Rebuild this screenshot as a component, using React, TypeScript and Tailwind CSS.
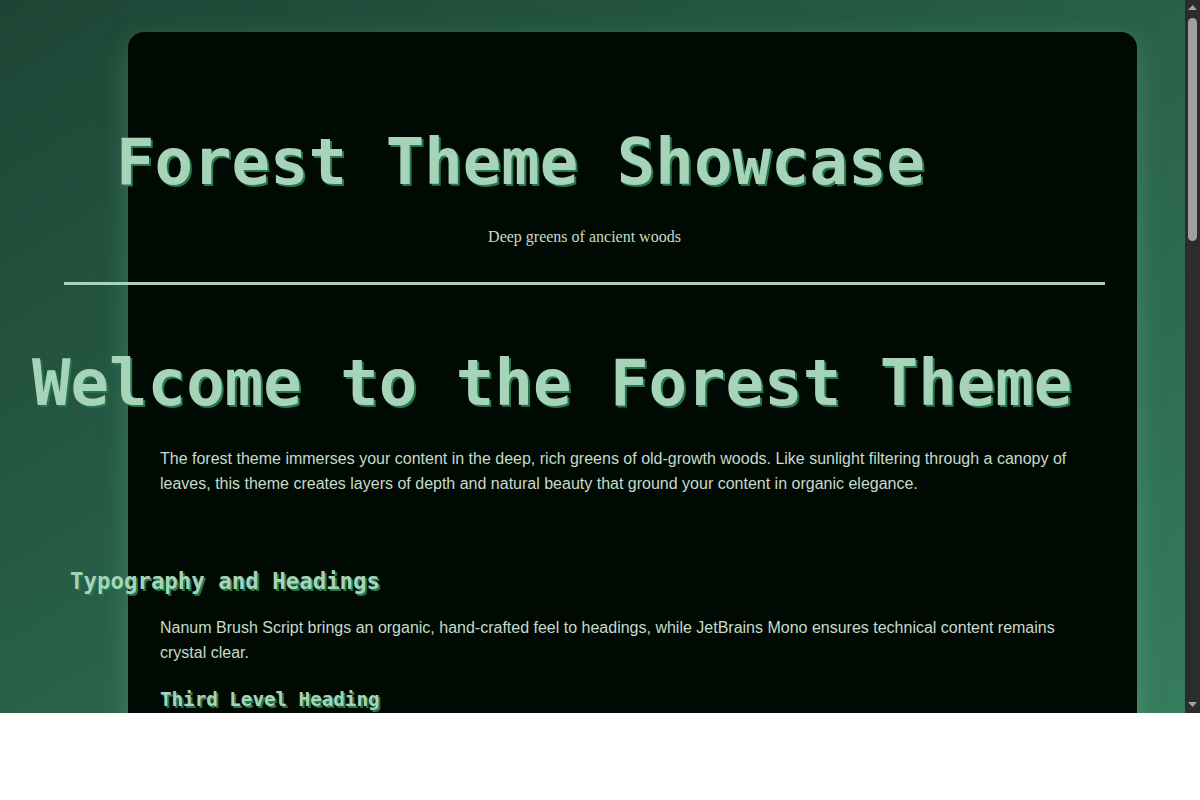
import React from "react";

const mono = { fontFamily: '"DejaVu Sans Mono", "Liberation Mono", monospace' };

const headShadow = "[text-shadow:2px_2px_0_#22774d]";

function Para({ children, className = "" }: { children: React.ReactNode; className?: string }) {
  return (
    <p className={`font-['Liberation_Sans',Arial,sans-serif] text-[16px] leading-[1.6] text-[#c6dacd] ${className}`}>
      {children}
    </p>
  );
}

function Scrollbar() {
  return (
    <div className="flex w-[15px] shrink-0 flex-col items-center bg-[#2c2c2c]">
      <svg width="9" height="5" viewBox="0 0 9 5" className="mt-[5px]">
        <polygon points="0,5 4.5,0 9,5" fill="#a3a3a3" />
      </svg>
      <div className="mt-[8px] h-[223px] w-[9px] rounded-full bg-[#9f9f9f]" />
      <div className="flex-1" />
      <svg width="9" height="5" viewBox="0 0 9 5" className="mb-[6px]">
        <polygon points="0,0 9,0 4.5,5" fill="#a3a3a3" />
      </svg>
    </div>
  );
}

export default function App() {
  return (
    <div className="flex h-[713px] w-full">
      <div className="min-w-0 flex-1 overflow-hidden bg-linear-to-br from-[#1d4535] to-[#357c5d]">
        <div className="pt-8">
          <main className="ml-[128px] w-[1009px] rounded-2xl bg-[#000a02] px-8 pb-32 shadow-[0_10px_30px_rgba(120,200,160,0.3)]">
            <header className="-ml-[96px] pt-[92px]">
              <h1
                style={mono}
                className={`-ml-[128px] text-center text-[64px] font-bold leading-[1.2] text-[#a7d3b9] ${headShadow}`}
              >
                Forest Theme Showcase
              </h1>
              <p className="mt-6 text-center font-['Liberation_Serif','Times_New_Roman',serif] text-[16px] leading-6 text-[#c6dacd]">
                Deep greens of ancient woods
              </p>
              <hr className="mt-[33px] border-0 border-t-[3px] border-[#a7d3b9]" />
            </header>

            <section>
              <h2
                style={mono}
                className={`-ml-[128px] mt-[60px] whitespace-nowrap text-[64px] font-bold leading-[1.2] text-[#a7d3b9] ${headShadow}`}
              >
                Welcome to the Forest Theme
              </h2>
              <Para className="mt-6">
                The forest theme immerses your content in the deep, rich greens of old-growth woods. Like sunlight
                filtering through a canopy of leaves, this theme creates layers of depth and natural beauty that ground
                your content in organic elegance.
              </Para>
            </section>

            <section>
              <h2
                style={mono}
                className={`-ml-[90px] mt-[71px] text-[22.4px] font-bold leading-[1.2] text-[#a7d3b9] ${headShadow}`}
              >
                Typography and Headings
              </h2>
              <Para className="mt-[20px]">
                Nanum Brush Script brings an organic, hand-crafted feel to headings, while JetBrains Mono ensures
                technical content remains crystal clear.
              </Para>
              <h3
                style={mono}
                className={`mt-[22px] text-[19.2px] font-bold leading-[1.2] text-[#a7d3b9] ${headShadow}`}
              >
                Third Level Heading
              </h3>
            </section>
          </main>
        </div>
      </div>
      <Scrollbar />
    </div>
  );
}
